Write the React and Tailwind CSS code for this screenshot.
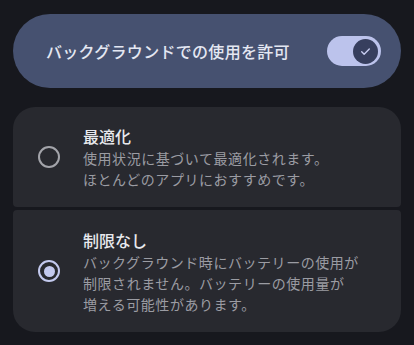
import React from "react";

const font = { fontFamily: '"Noto Sans CJK JP", "Noto Sans", sans-serif' };

function Radio({ checked }) {
  if (checked) {
    return (
      <div className="flex h-[22px] w-[22px] shrink-0 items-center justify-center rounded-full border-2 border-[#c3c9ee]">
        <div className="h-[11px] w-[11px] rounded-full bg-[#c3c9ee]" />
      </div>
    );
  }
  return <div className="h-[22px] w-[22px] shrink-0 rounded-full border-2 border-[#a3a4aa]" />;
}

function Option({ title, lines, checked, className }) {
  return (
    <div className={"flex items-center bg-[#28292f] pl-[25px] pr-4 " + className}>
      <Radio checked={checked} />
      <div className="ml-[23px]">
        <div className="text-[16px] font-medium leading-[24px] text-[#e8e9ee]">{title}</div>
        {lines.map((l) => (
          <div key={l} className="text-[14px] leading-[21px] tracking-[0.55px] text-[#9b9ca3]">
            {l}
          </div>
        ))}
      </div>
    </div>
  );
}

export default function App() {
  return (
    <div className="h-[345px] w-[414px] bg-[#17181e] px-[13px] pt-[14px]" style={font}>
      <div className="flex h-[74px] items-center justify-between rounded-full bg-[#465170] pl-[33px] pr-[20px]">
        <span className="text-[16px] font-medium tracking-[0.3px] text-[#e4e7f2]">
          バックグラウンドでの使用を許可
        </span>
        <div className="flex h-[30px] w-[54px] items-center justify-end rounded-full bg-[#bcc3ec] pr-[3px]">
          <div className="flex h-[25px] w-[25px] items-center justify-center rounded-full bg-[#373f5e]">
            <svg width="13" height="13" viewBox="0 0 24 24" fill="none" stroke="#c8cdf0" strokeWidth="2.5" strokeLinecap="round" strokeLinejoin="round">
              <path d="M5 12.5l4.5 4.5L19 7.5" />
            </svg>
          </div>
        </div>
      </div>
      <div className="mt-[19px] flex flex-col gap-[3px]">
        <Option
          className="h-[100px] rounded-t-[22px] rounded-b-[4px]"
          title="最適化"
          lines={["使用状況に基づいて最適化されます。", "ほとんどのアプリにおすすめです。"]}
        />
        <Option
          className="h-[122px] rounded-t-[4px] rounded-b-[22px]"
          checked
          title="制限なし"
          lines={[
            "バックグラウンド時にバッテリーの使用が",
            "制限されません。バッテリーの使用量が",
            "増える可能性があります。",
          ]}
        />
      </div>
    </div>
  );
}
